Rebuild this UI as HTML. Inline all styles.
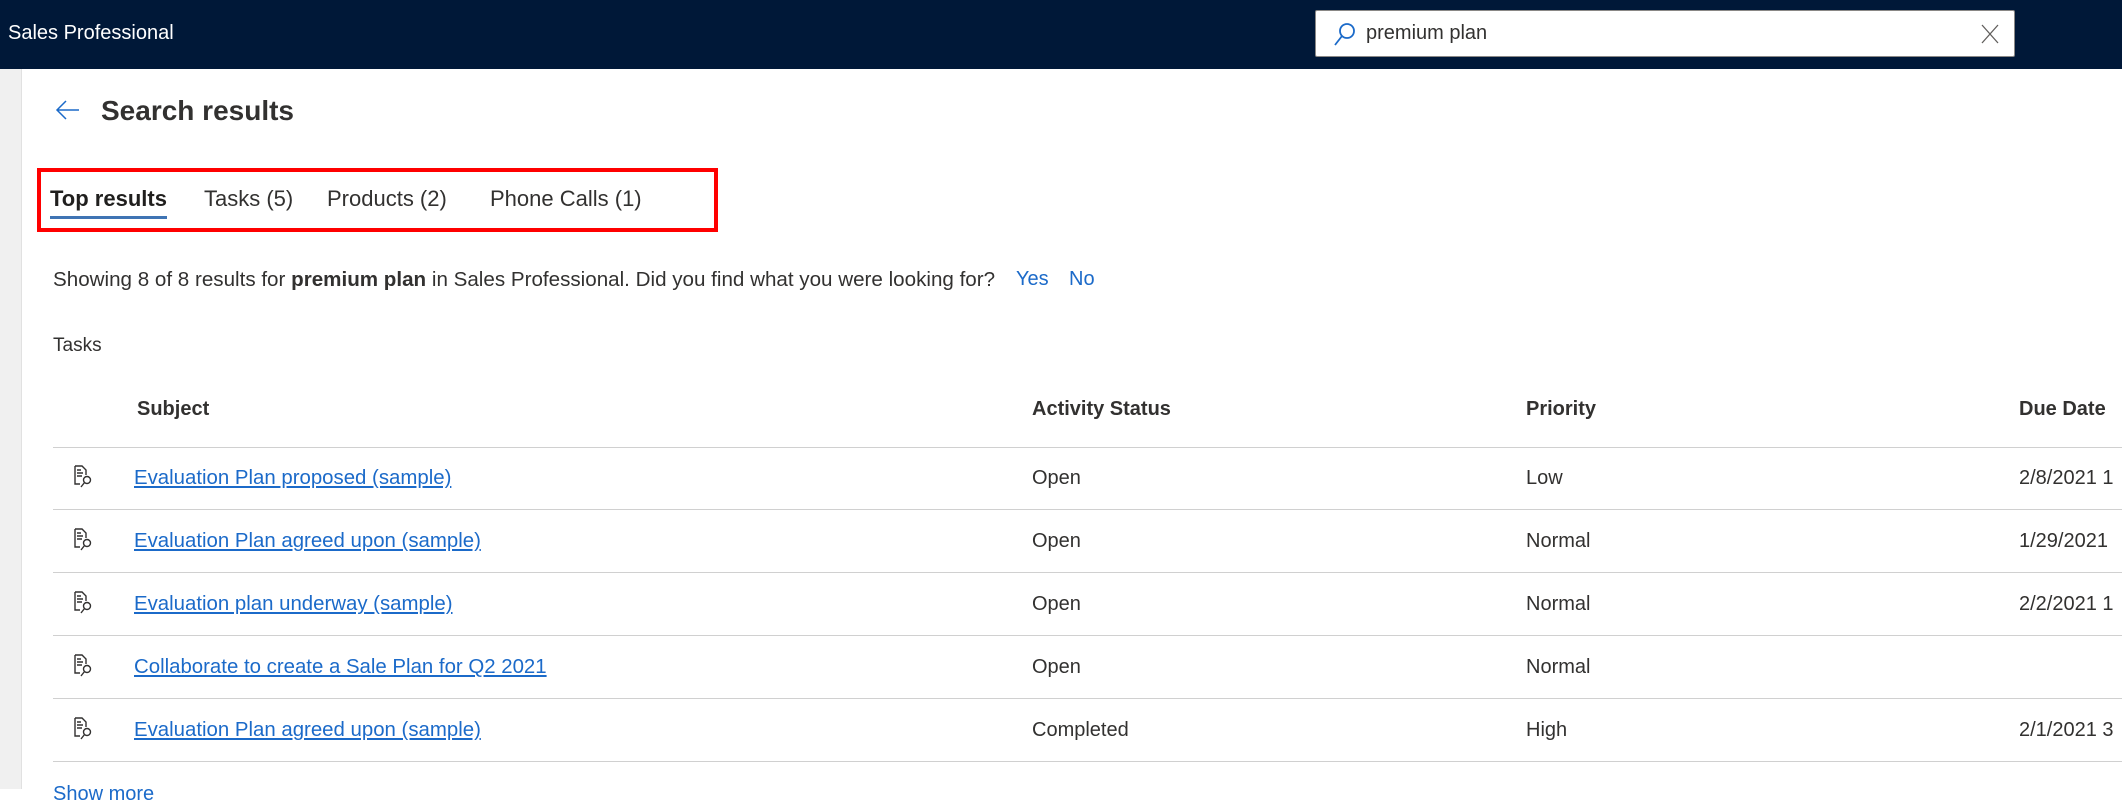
<!DOCTYPE html>
<html><head><meta charset="utf-8"><style>
*{margin:0;padding:0;box-sizing:border-box}
body{width:2122px;height:789px;overflow:hidden;background:#fff;font-family:"Liberation Sans",sans-serif;color:#323130;position:relative}
.a{position:absolute;white-space:nowrap}
.hdr{left:0;top:0;width:2122px;height:69px;background:#001838}
.side{left:0;top:69px;width:22px;height:720px;background:#f0f0f0;border-right:1px solid #e1e1e1}
.line{position:absolute;left:53px;right:0;height:1px;background:#d0d0d0}
.lnk{color:#1b6ac9;text-decoration:underline;font-size:20.4px}
.c{font-size:20px}
</style></head><body>
<div class="a hdr"></div>
<div class="a" style="left:8px;top:22px;font-size:20px;color:#fff">Sales Professional</div>
<div class="a" style="left:1315px;top:10px;width:700px;height:47px;background:#fff;border:1px solid #8a8886;border-radius:2px"></div>
<svg class="a" style="left:1333px;top:21px" width="24" height="26" viewBox="0 0 24 26"><circle cx="14" cy="10" r="7" fill="none" stroke="#1b6ac9" stroke-width="1.8"/><path d="M9 15 L2 24" stroke="#1b6ac9" stroke-width="1.8"/></svg>
<div class="a" style="left:1366px;top:22px;font-size:20px;color:#323130">premium plan</div>
<svg class="a" style="left:1981px;top:24px" width="18" height="20"><path d="M1 1 L17 19 M17 1 L1 19" stroke="#605e5c" stroke-width="1.3"/></svg>
<div class="a side"></div>
<svg class="a" style="left:55px;top:99px" width="26" height="22"><path d="M24 11 H3 M11 2 L2 11 L11 20" fill="none" stroke="#1b6ac9" stroke-width="1.5"/></svg>
<div class="a" style="left:101px;top:95px;font-size:28px;font-weight:600">Search results</div>
<div class="a" style="left:37px;top:168px;width:681px;height:64px;border:4px solid #f00"></div>
<div class="a" style="left:50px;top:186px;font-size:22px;font-weight:700;color:#201f1e">Top results</div>
<div class="a" style="left:50px;top:216px;width:117px;height:3px;background:#3f74b4"></div>
<div class="a" style="left:204px;top:186px;font-size:22px">Tasks (5)</div>
<div class="a" style="left:327px;top:186px;font-size:22px">Products (2)</div>
<div class="a" style="left:490px;top:186px;font-size:22px">Phone Calls (1)</div>
<div class="a" style="left:53px;top:268px;font-size:20.6px">Showing 8 of 8 results for <b>premium plan</b> in Sales Professional. Did you find what you were looking for?</div>
<div class="a" style="left:1016px;top:268px;font-size:20px;color:#1b6ac9">Yes</div>
<div class="a" style="left:1069px;top:268px;font-size:20px;color:#1b6ac9">No</div>
<div class="a" style="left:53px;top:335px;font-size:19px">Tasks</div>
<div class="a c" style="left:137px;top:398px;font-weight:600">Subject</div>
<div class="a c" style="left:1032px;top:398px;font-weight:600">Activity Status</div>
<div class="a c" style="left:1526px;top:398px;font-weight:600">Priority</div>
<div class="a c" style="left:2019px;top:398px;font-weight:600">Due Date</div>
<div class="line" style="top:447px"></div>
<div class="line" style="top:509px"></div>
<div class="line" style="top:572px"></div>
<div class="line" style="top:635px"></div>
<div class="line" style="top:698px"></div>
<div class="line" style="top:761px"></div>

<div style="position:absolute;left:0;top:467px;width:2122px">
<svg class="a" style="left:73px;top:-2px" width="20" height="24"><path d="M2 1 H9 L13 5 V10 M2 1 V19 H7 M4 5 H8 M4 8 H10 M4 11 H9" fill="none" stroke="#323130" stroke-width="1.4"/><circle cx="14" cy="15" r="3.5" fill="none" stroke="#323130" stroke-width="1.4"/><path d="M11.5 17.5 L8 22" stroke="#323130" stroke-width="1.4"/></svg>
<div class="a lnk" style="left:134px;top:0">Evaluation Plan proposed (sample)</div>
<div class="a c" style="left:1032px;top:0">Open</div><div class="a c" style="left:1526px;top:0">Low</div><div class="a c" style="left:2019px;top:0">2/8/2021 1</div>
</div>
<div style="position:absolute;left:0;top:530px;width:2122px">
<svg class="a" style="left:73px;top:-2px" width="20" height="24"><path d="M2 1 H9 L13 5 V10 M2 1 V19 H7 M4 5 H8 M4 8 H10 M4 11 H9" fill="none" stroke="#323130" stroke-width="1.4"/><circle cx="14" cy="15" r="3.5" fill="none" stroke="#323130" stroke-width="1.4"/><path d="M11.5 17.5 L8 22" stroke="#323130" stroke-width="1.4"/></svg>
<div class="a lnk" style="left:134px;top:0">Evaluation Plan agreed upon (sample)</div>
<div class="a c" style="left:1032px;top:0">Open</div><div class="a c" style="left:1526px;top:0">Normal</div><div class="a c" style="left:2019px;top:0">1/29/2021</div>
</div>
<div style="position:absolute;left:0;top:593px;width:2122px">
<svg class="a" style="left:73px;top:-2px" width="20" height="24"><path d="M2 1 H9 L13 5 V10 M2 1 V19 H7 M4 5 H8 M4 8 H10 M4 11 H9" fill="none" stroke="#323130" stroke-width="1.4"/><circle cx="14" cy="15" r="3.5" fill="none" stroke="#323130" stroke-width="1.4"/><path d="M11.5 17.5 L8 22" stroke="#323130" stroke-width="1.4"/></svg>
<div class="a lnk" style="left:134px;top:0">Evaluation plan underway (sample)</div>
<div class="a c" style="left:1032px;top:0">Open</div><div class="a c" style="left:1526px;top:0">Normal</div><div class="a c" style="left:2019px;top:0">2/2/2021 1</div>
</div>
<div style="position:absolute;left:0;top:656px;width:2122px">
<svg class="a" style="left:73px;top:-2px" width="20" height="24"><path d="M2 1 H9 L13 5 V10 M2 1 V19 H7 M4 5 H8 M4 8 H10 M4 11 H9" fill="none" stroke="#323130" stroke-width="1.4"/><circle cx="14" cy="15" r="3.5" fill="none" stroke="#323130" stroke-width="1.4"/><path d="M11.5 17.5 L8 22" stroke="#323130" stroke-width="1.4"/></svg>
<div class="a lnk" style="left:134px;top:0">Collaborate to create a Sale Plan for Q2 2021</div>
<div class="a c" style="left:1032px;top:0">Open</div><div class="a c" style="left:1526px;top:0">Normal</div>
</div>
<div style="position:absolute;left:0;top:719px;width:2122px">
<svg class="a" style="left:73px;top:-2px" width="20" height="24"><path d="M2 1 H9 L13 5 V10 M2 1 V19 H7 M4 5 H8 M4 8 H10 M4 11 H9" fill="none" stroke="#323130" stroke-width="1.4"/><circle cx="14" cy="15" r="3.5" fill="none" stroke="#323130" stroke-width="1.4"/><path d="M11.5 17.5 L8 22" stroke="#323130" stroke-width="1.4"/></svg>
<div class="a lnk" style="left:134px;top:0">Evaluation Plan agreed upon (sample)</div>
<div class="a c" style="left:1032px;top:0">Completed</div><div class="a c" style="left:1526px;top:0">High</div><div class="a c" style="left:2019px;top:0">2/1/2021 3</div>
</div>
<div class="a" style="left:53px;top:783px;font-size:20px;color:#1b6ac9">Show more</div>
</body></html>
